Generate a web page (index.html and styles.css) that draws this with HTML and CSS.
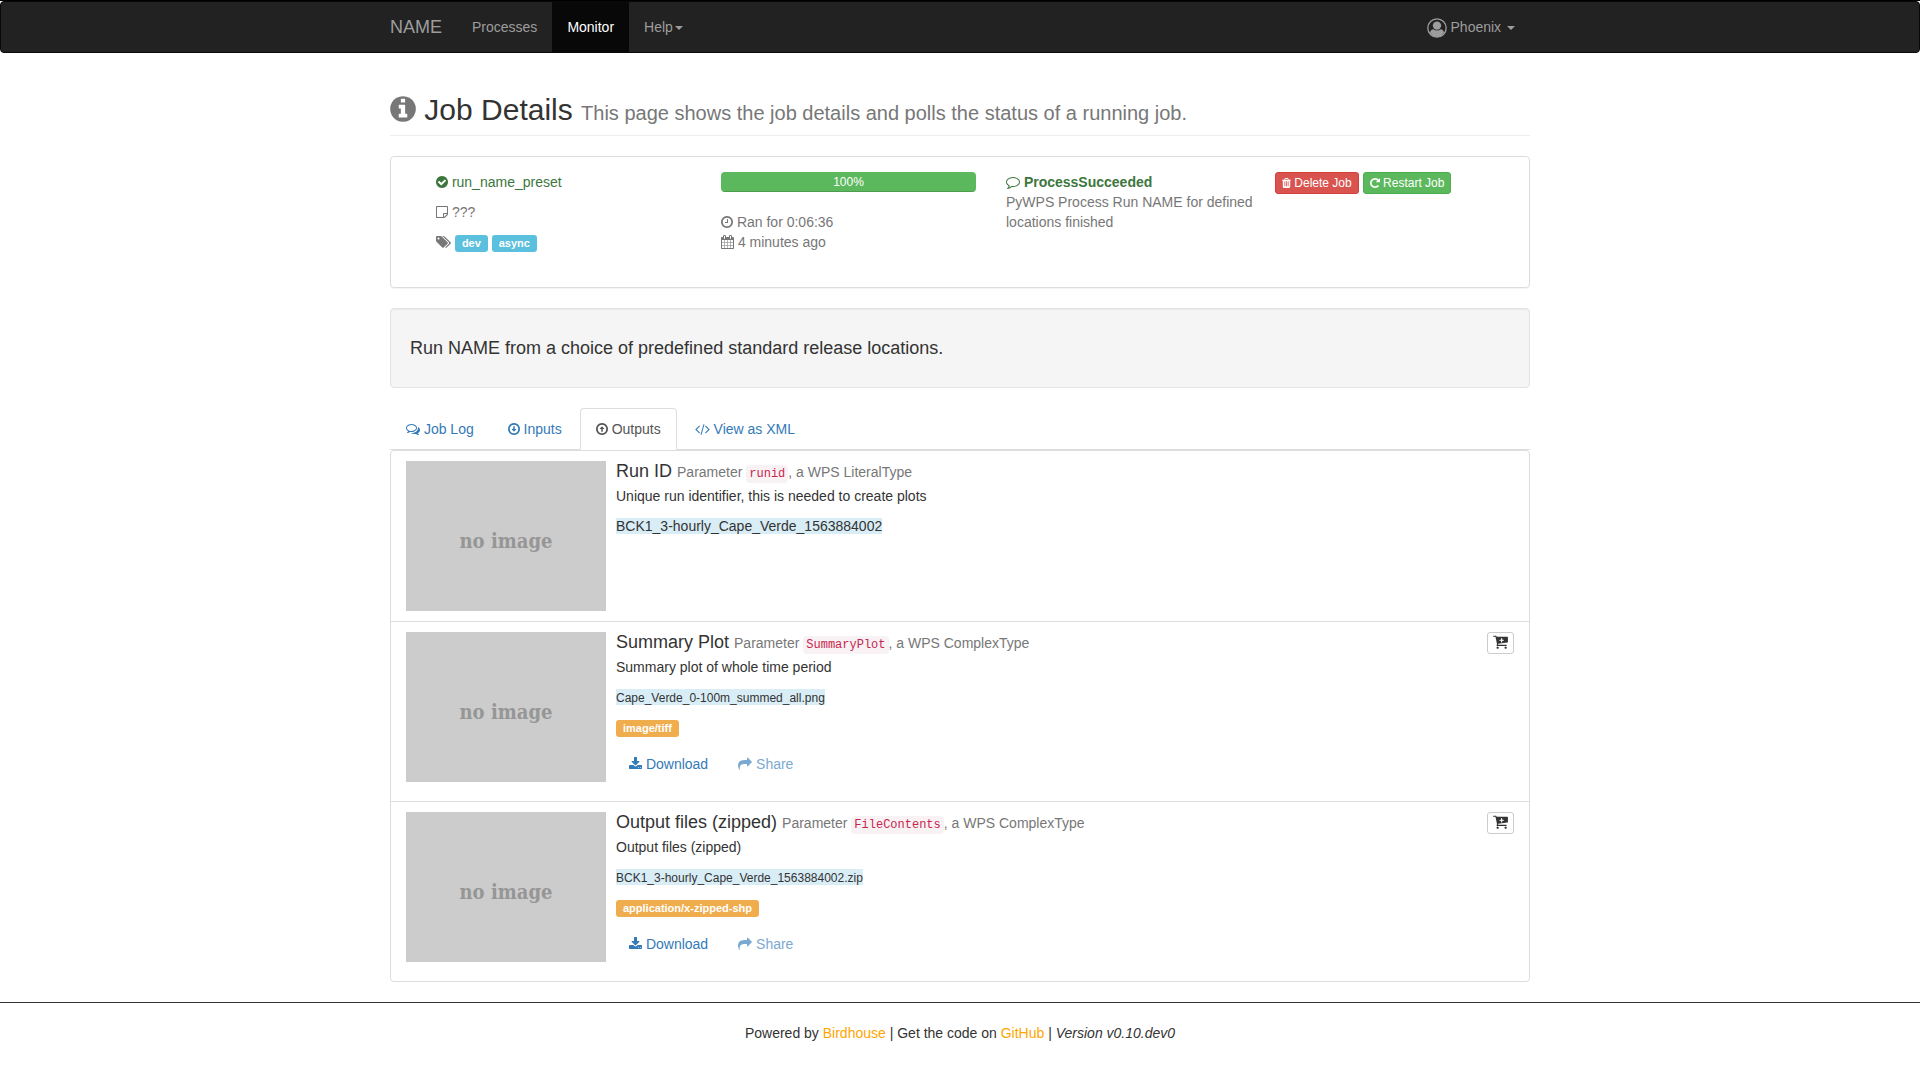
FILE: index.html
```html
<!DOCTYPE html>
<html lang="en">
<head>
<meta charset="utf-8">
<meta name="viewport" content="width=device-width, initial-scale=1">
<title>Job Details</title>
<link rel="stylesheet" href="styles.css">
</head>
<body>
<svg class="sprite" aria-hidden="true">
  <symbol id="info-circle" viewBox="128 0 1536 1792"><path d="M1152 1376v-160q0-14-9-23t-23-9h-96v-512q0-14-9-23t-23-9h-320q-14 0-23 9t-9 23v160q0 14 9 23t23 9h96v320h-96q-14 0-23 9t-9 23v160q0 14 9 23t23 9h448q14 0 23-9t9-23zm-128-896v-160q0-14-9-23t-23-9h-192q-14 0-23 9t-9 23v160q0 14 9 23t23 9h192q14 0 23-9t9-23zm640 416q0 209-103 385.5t-279.5 279.5-385.5 103-385.5-103-279.5-279.5-103-385.5 103-385.5 279.5-279.5 385.5-103 385.5 103 279.5 279.5 103 385.5z"/></symbol>
  <symbol id="check-circle" viewBox="128 0 1536 1792"><path d="M1412 734q0-28-18-46l-91-90q-19-19-45-19t-45 19l-408 407-226-226q-19-19-45-19t-45 19l-91 90q-18 18-18 46 0 27 18 45l362 362q19 19 45 19 27 0 46-19l543-543q18-18 18-45zm252 162q0 209-103 385.5t-279.5 279.5-385.5 103-385.5-103-279.5-279.5-103-385.5 103-385.5 279.5-279.5 385.5-103 385.5 103 279.5 279.5 103 385.5z"/></symbol>
  <symbol id="note" viewBox="128 0 1536 1792"><path fill-rule="evenodd" d="M224 128h1344q40 0 68 28t28 68v928q0 88-68 156l-288 288q-68 68-156 68h-928q-40 0-68-28t-28-68v-1344q0-40 28-68t68-28zM256 256v1280h768v-416q0-40 28-68t68-28h416v-768zM1152 1528q30-10 44-24l308-308q14-14 24-44h-376z"/></symbol>
  <symbol id="tags" viewBox="0 0 1920 1792"><path d="M448 448q0-53-37.500-90.500t-90.500-37.500-90.500 37.500-37.500 90.500 37.500 90.500 90.500 37.500 90.500-37.500 37.500-90.500zm1067 576q0 53-37 90l-491 492q-39 37-91 37-53 0-90-37l-715-716q-38-37-64.500-101t-26.500-117v-416q0-52 38-90t90-38h416q53 0 117 26.500t102 64.500l715 714q37 39 37 91zm384 0q0 53-37 90l-491 492q-39 37-91 37-36 0-59-14t-53-45l470-470q37-37 37-90 0-52-37-91l-715-714q-38-38-102-64.500t-117-26.500h224q53 0 117 26.500t102 64.500l715 714q37 39 37 91z"/></symbol>
  <symbol id="clock" viewBox="128 0 1536 1792"><path d="M1024 544v448q0 14-9 23t-23 9h-320q-14 0-23-9t-9-23v-64q0-14 9-23t23-9h224v-352q0-14 9-23t23-9h64q14 0 23 9t9 23zm416 352q0-148-73-273t-198-198-273-73-273 73-198 198-73 273 73 273 198 198 273 73 273-73 198-198 73-273zm224 0q0 209-103 385.500t-279.500 279.500-385.500 103-385.500-103-279.500-279.500-103-385.500 103-385.500 279.500-279.500 385.500-103 385.500 103 279.500 279.500 103 385.500z"/></symbol>
  <symbol id="calendar" viewBox="64 0 1664 1792"><path d="M192 1664h288v-288h-288v288zm352 0h320v-288h-320v288zm-352-352h288v-320h-288v320zm352 0h320v-320h-320v320zm-352-384h288v-288h-288v288zm736 736h320v-288h-320v288zm-384-736h320v-288h-320v288zm768 736h288v-288h-288v288zm-384-352h320v-320h-320v320zm-352-864v-288q0-13-9.500-22.500t-22.500-9.500h-64q-13 0-22.500 9.500t-9.500 22.500v288q0 13 9.500 22.500t22.500 9.500h64q13 0 22.500-9.500t9.500-22.500zm736 864h288v-320h-288v320zm-384-384h320v-288h-320v288zm384 0h288v-288h-288v288zm32-480v-288q0-13-9.500-22.500t-22.500-9.500h-64q-13 0-22.500 9.500t-9.500 22.500v288q0 13 9.500 22.500t22.500 9.500h64q13 0 22.500-9.500t9.500-22.500zm384-64v1280q0 52-38 90t-90 38h-1408q-52 0-90-38t-38-90v-1280q0-52 38-90t90-38h128v-96q0-66 47-113t113-47h64q66 0 113 47t47 113v96h384v-96q0-66 47-113t113-47h64q66 0 113 47t47 113v96h128q52 0 90 38t38 90z"/></symbol>
  <symbol id="comment" viewBox="0 0 1792 1792"><path d="M896 384q-204 0-381.500 69.500t-282 187.500-104.500 255q0 112 71.500 213.500t201.500 175.500l87 50-27 96q-24 91-70 172 152-63 275-171l43-38 57 6q69 8 130 8 204 0 381.500-69.500t282-187.500 104.500-255-104.500-255-282-187.500-381.500-69.500zm896 512q0 174-120 321.500t-326 233-450 85.500q-70 0-145-8-198 175-460 242-49 14-114 22h-5q-15 0-27-10.500t-16-27.500v-1q-3-4-.5-12t2-10 4.500-9.500l6-9 7-8.500 8-9q7-8 31-34.500t34.500-38 31-39.500 32.500-51 27-59 26-76q-157-89-247.500-220t-90.500-281q0-174 120-321.500t326-233 450-85.500 450 85.500 326 233 120 321.500z"/></symbol>
  <symbol id="comments" viewBox="0 0 1792 1792"><path d="M704 384q-153 0-286 52t-211.500 141-78.500 191q0 82 53 158t149 132l97 56-35 84q34-20 62-39l44-31 53 10q78 14 153 14 153 0 286-52t211.500-141 78.500-191-78.500-191-211.500-141-286-52zm0-128q191 0 353.500 68.500t256.500 186.500 94 257-94 257-256.500 186.500-353.500 68.500q-86 0-176-16-124 88-278 128-36 9-86 16h-3q-11 0-20.500-8t-11.500-21q-1-3-1-6.500t.5-6.500 2-6l2.500-5 3.500-5.500 4-5 4.500-5 4-4.500q5-6 23-25t26-29.500 22.500-29 25-38.500 20.500-44q-124-72-195-177t-71-224q0-139 94-257t256.500-186.500 353.500-68.500zm822 1169q10 24 20.500 44t25 38.500 22.500 29 26 29.500 23 25q1 1 4 4.500t4.500 5 4 5 3.500 5.500l2.500 5 2 6 .5 6.500-1 6.500q-3 14-13 22t-22 7q-50-7-86-16-154-40-278-128-90 16-176 16-271 0-472-132 58 4 88 4 161 0 309-45t264-129q125-92 192-212t67-254q0-77-23-152 129 71 204 178t75 230q0 120-71 224.500t-195 176.500z"/></symbol>
  <symbol id="circle-down" viewBox="128 0 1536 1792"><path d="M992 576v320h160q21 0 29 20 8 19-7 35l-255 255q-10 10-23 10t-23-10l-255-255q-15-16-7-35 8-20 29-20h160v-320q0-14 9-23t23-9h128q14 0 23 9t9 23zm448 320q0-148-73-273t-198-198-273-73-273 73-198 198-73 273 73 273 198 198 273 73 273-73 198-198 73-273zm224 0q0 209-103 385.500t-279.500 279.500-385.500 103-385.500-103-279.500-279.500-103-385.500 103-385.500 279.500-279.500 385.500-103 385.500 103 279.500 279.500 103 385.500z"/></symbol>
  <symbol id="circle-up" viewBox="128 0 1536 1792"><path transform="rotate(180 896 896)" d="M992 576v320h160q21 0 29 20 8 19-7 35l-255 255q-10 10-23 10t-23-10l-255-255q-15-16-7-35 8-20 29-20h160v-320q0-14 9-23t23-9h128q14 0 23 9t9 23zm448 320q0-148-73-273t-198-198-273-73-273 73-198 198-73 273 73 273 198 198 273 73 273-73 198-198 73-273zm224 0q0 209-103 385.500t-279.500 279.500-385.500 103-385.500-103-279.500-279.500-103-385.500 103-385.500 279.500-279.500 385.500-103 385.500 103 279.500 279.500 103 385.500z"/></symbol>
  <symbol id="code" viewBox="0 0 1920 1792"><path d="M617 1399l-50 50q-10 10-23 10t-23-10l-466-466q-10-10-10-23t10-23l466-466q10-10 23-10t23 10l50 50q10 10 10 23t-10 23l-393 393 393 393q10 10 10 23t-10 23zm591-1067l-373 1291q-4 13-15.500 19.500t-23.500 2.500l-62-17q-13-4-19.500-15.500t-2.500-24.500l373-1291q4-13 15.500-19.500t23.500-2.500l62 17q13 4 19.500 15.500t2.500 24.500zm657 651l-466 466q-10 10-23 10t-23-10l-50-50q-10-10-10-23t10-23l393-393-393-393q-10-10-10-23t10-23l50-50q10-10 23-10t23 10l466 466q10 10 10 23t-10 23z"/></symbol>
  <symbol id="download" viewBox="64 0 1664 1792"><path d="M1344 1344q0-26-19-45t-45-19-45 19-19 45 19 45 45 19 45-19 19-45zm256 0q0-26-19-45t-45-19-45 19-19 45 19 45 45 19 45-19 19-45zm128-224v320q0 40-28 68t-68 28h-1472q-40 0-68-28t-28-68v-320q0-40 28-68t68-28h465l135 136q58 56 136 56t136-56l136-136h464q40 0 68 28t28 68zm-325-569q17 41-14 70l-448 448q-18 19-45 19t-45-19l-448-448q-31-29-14-70 17-39 59-39h256v-448q0-26 19-45t45-19h256q26 0 45 19t19 45v448h256q42 0 59 39z"/></symbol>
  <symbol id="share" viewBox="0 0 1792 1792"><path d="M1792 640q0 26-19 45l-512 512q-19 19-45 19t-45-19-19-45v-256h-224q-98 0-175.500 6t-154 21.500-133 42.500-105.500 69.500-80 101-48.500 138.500-17.500 181q0 55 5 123 0 6 2.500 23.500t2.500 26.500q0 15-8.500 25t-23.500 10q-16 0-28-17-7-9-13-22t-13.500-30-10.500-24q-127-285-127-451 0-199 53-333 162-403 875-403h224v-256q0-26 19-45t45-19 45 19l512 512q19 19 19 45z"/></symbol>
  <symbol id="trash" viewBox="192 0 1408 1792"><path d="M704 1376v-704q0-14-9-23t-23-9h-64q-14 0-23 9t-9 23v704q0 14 9 23t23 9h64q14 0 23-9t9-23zm256 0v-704q0-14-9-23t-23-9h-64q-14 0-23 9t-9 23v704q0 14 9 23t23 9h64q14 0 23-9t9-23zm256 0v-704q0-14-9-23t-23-9h-64q-14 0-23 9t-9 23v704q0 14 9 23t23 9h64q14 0 23-9t9-23zm-544-992h448l-48-117q-7-9-17-11h-317q-10 2-17 11zm928 32v64q0 14-9 23t-23 9h-96v948q0 83-47 143.500t-113 60.500h-832q-66 0-113-58.500t-47-141.500v-952h-96q-14 0-23-9t-9-23v-64q0-14 9-23t23-9h309l70-167q15-37 54-63t79-26h320q40 0 79 26t54 63l70 167h309q14 0 23 9t9 23z"/></symbol>
  <symbol id="repeat" viewBox="128 0 1536 1792"><path d="M1664 256v448q0 26-19 45t-45 19h-448q-42 0-59-40-17-39 14-69l138-138q-148-137-349-137-104 0-198.500 40.500t-163.500 109.500-109.500 163.500-40.500 198.500 40.500 198.500 109.500 163.500 163.500 109.500 198.500 40.500q119 0 225-52t179-147q7-10 23-12 15 0 25 9l137 138q9 8 9.500 20.500t-7.500 22.500q-109 132-264 204.500t-327 72.500q-156 0-298-61t-245-164-164-245-61-298 61-298 164-245 245-164 298-61q147 0 284.500 55.500t244.500 156.500l130-129q29-31 70-14 39 17 39 59z"/></symbol>
  <symbol id="cart-plus" viewBox="64 0 1664 1792"><path fill-rule="evenodd" d="M1280 704q0-26-19-45t-45-19h-128v-128q0-26-19-45t-45-19-45 19-19 45v128h-128q-26 0-45 19t-19 45 19 45 45 19h128v128q0 26 19 45t45 19 45-19 19-45v-128h128q26 0 45-19t19-45zM704 1536q0 52-38 90t-90 38-90-38-38-90 38-90 90-38 90 38 38 90zm896 0q0 52-38 90t-90 38-90-38-38-90 38-90 90-38 90 38 38 90zm128-1152v512q0 24-16.500 42.500t-40.500 21.500l-1044 122q13 60 13 70 0 16-24 64h920q26 0 45 19t19 45-19 45-45 19h-1024q-26 0-45-19t-19-45q0-11 8-31.500t16-36 21.500-40 15.500-29.500l-177-823h-204q-26 0-45-19t-19-45 19-45 45-19h256q16 0 28.500 6.500t19.500 15.500 13 24.500 8 26 5.500 29.500 4.500 26h1201q26 0 45 19t19 45z"/></symbol>
  <symbol id="user" viewBox="0 0 20 20"><circle cx="10" cy="10" r="9.200" fill="none" stroke="currentColor" stroke-width="1.300"/><circle cx="10" cy="7.600" r="4.200"/><path d="M3 14.800q.6-3.200 3.400-3.500 1.500 1.200 3.600 1.200t3.600-1.200q2.800.3 3.400 3.500-2.600 4.200-7 4.200t-7-4.200z"/></symbol>
</svg>

<nav class="navbar">
  <div class="container navbar-row">
    <a class="brand" href="#">NAME</a>
    <ul class="menu">
      <li><a href="#">Processes</a></li>
      <li><a class="active" href="#">Monitor</a></li>
      <li><a href="#">Help<span class="caret"></span></a></li>
    </ul>
    <ul class="menu menu-right">
      <li><a href="#"><svg class="icon icon-user"><use href="#user"/></svg> Phoenix <span class="caret"></span></a></li>
    </ul>
  </div>
</nav>

<main class="container">
  <header class="page-header">
    <h1><svg class="icon icon-title"><use href="#info-circle"/></svg> Job Details <small>This page shows the job details and polls the status of a running job.</small></h1>
  </header>

  <section class="panel">
    <div class="col muted">
      <p class="success"><svg class="icon w12"><use href="#check-circle"/></svg> run_name_preset</p>
      <p><svg class="icon w12"><use href="#note"/></svg> ???</p>
      <p><svg class="icon w15"><use href="#tags"/></svg> <span class="label info">dev</span> <span class="label info">async</span></p>
    </div>
    <div class="col muted">
      <div class="progress"><div class="progress-bar" style="width: 100%">100%</div></div>
      <div><svg class="icon w12"><use href="#clock"/></svg> Ran for 0:06:36</div>
      <div><svg class="icon w13"><use href="#calendar"/></svg> 4 minutes ago</div>
    </div>
    <div class="col muted">
      <div class="success"><svg class="icon w14"><use href="#comment"/></svg> <strong>ProcessSucceeded</strong></div>
      <div>PyWPS Process Run NAME for defined locations finished</div>
    </div>
    <div class="actions">
      <button type="button" class="btn-xs danger"><svg class="icon w9"><use href="#trash"/></svg> Delete Job</button>
      <button type="button" class="btn-xs ok"><svg class="icon w10"><use href="#repeat"/></svg> Restart Job</button>
    </div>
  </section>

  <section class="well">Run NAME from a choice of predefined standard release locations.</section>

  <ul class="tabs">
    <li><a href="#"><svg class="icon w14"><use href="#comments"/></svg> Job Log</a></li>
    <li><a href="#"><svg class="icon w12"><use href="#circle-down"/></svg> Inputs</a></li>
    <li><a class="active" href="#"><svg class="icon w12"><use href="#circle-up"/></svg> Outputs</a></li>
    <li><a href="#"><svg class="icon w15"><use href="#code"/></svg> View as XML</a></li>
  </ul>

  <ul class="list">
    <li class="item">
      <div class="thumb">no image</div>
      <div class="item-body">
        <h4>Run ID <small>Parameter <code>runid</code>, a WPS LiteralType</small></h4>
        <p>Unique run identifier, this is needed to create plots</p>
        <p><span class="value">BCK1_3-hourly_Cape_Verde_1563884002</span></p>
      </div>
    </li>
    <li class="item">
      <div class="thumb">no image</div>
      <div class="item-body">
        <h4>Summary Plot <small>Parameter <code>SummaryPlot</code>, a WPS ComplexType</small></h4>
        <p>Summary plot of whole time period</p>
        <p><span class="value"><span class="file">Cape_Verde_0-100m_summed_all.png</span></span></p>
        <p><span class="label warning">image/tiff</span></p>
        <div class="links">
          <a href="#"><svg class="icon w13"><use href="#download"/></svg> Download</a>
          <a class="disabled" href="#"><svg class="icon w14"><use href="#share"/></svg> Share</a>
        </div>
      </div>
      <button type="button" class="btn-xs plain" aria-label="Add to cart"><svg class="icon icon-cart"><use href="#cart-plus"/></svg></button>
    </li>
    <li class="item">
      <div class="thumb">no image</div>
      <div class="item-body">
        <h4>Output files (zipped) <small>Parameter <code>FileContents</code>, a WPS ComplexType</small></h4>
        <p>Output files (zipped)</p>
        <p><span class="value"><span class="file">BCK1_3-hourly_Cape_Verde_1563884002.zip</span></span></p>
        <p><span class="label warning">application/x-zipped-shp</span></p>
        <div class="links">
          <a href="#"><svg class="icon w13"><use href="#download"/></svg> Download</a>
          <a class="disabled" href="#"><svg class="icon w14"><use href="#share"/></svg> Share</a>
        </div>
      </div>
      <button type="button" class="btn-xs plain" aria-label="Add to cart"><svg class="icon icon-cart"><use href="#cart-plus"/></svg></button>
    </li>
  </ul>
</main>

<footer class="footer">Powered by <a href="#">Birdhouse</a> | Get the code on <a href="#">GitHub</a> | <em>Version v0.10.dev0</em></footer>
</body>
</html>
```
FILE: styles.css
```css
* { box-sizing: border-box; }

body {
  margin: 0;
  border-top: 1px solid #000;
  background: #fff;
  color: #333;
  font: 14px/20px "Liberation Sans", Arial, sans-serif;
}

ul { margin: 0; padding: 0; list-style: none; }
p { margin: 0 0 10px; }
a { color: #337ab7; text-decoration: none; }
.sprite { display: none; }

.container {
  max-width: 1170px;
  margin: 0 auto;
  padding: 0 15px;
}

/* Icons */
.icon {
  display: inline-block;
  width: 14px;
  height: 14px;
  vertical-align: -2px;
  fill: currentColor;
}
.w9 { width: 9px; height: 12px; }
.w10 { width: 10px; height: 12px; }
.w12 { width: 12px; }
.w13 { width: 13px; }
.w15 { width: 15px; }
.icon-title { width: 26px; height: 30px; vertical-align: -4px; color: #777; }
.icon-user { width: 20px; height: 20px; margin: -5px 0; vertical-align: middle; }
.icon-cart { width: 15px; height: 16px; vertical-align: -3px; }

/* Navigation bar */
.navbar {
  border: 1px solid #080808;
  border-radius: 4px;
  background: #222;
}
.navbar-row { display: flex; }
.navbar a { display: block; color: #9d9d9d; padding: 15px; }
.navbar .brand { padding-left: 0; font-size: 18px; }
.menu { display: flex; }
.menu-right { margin-left: auto; }
.navbar .active { background: #080808; color: #fff; }
.caret {
  display: inline-block;
  margin-left: 2px;
  vertical-align: middle;
  border-top: 4px solid;
  border-left: 4px solid transparent;
  border-right: 4px solid transparent;
}

/* Page title */
.page-header {
  margin: 40px 0 20px;
  padding-bottom: 9px;
  border-bottom: 1px solid #eee;
}
h1 { margin: 0; font-size: 30px; line-height: 33px; font-weight: 500; }
h1 small { font-size: 20px; line-height: 20px; font-weight: 400; color: #777; }

/* Job summary */
.panel {
  display: grid;
  grid-template-columns: repeat(3, minmax(0, 285px)) 1fr;
  margin-bottom: 20px;
  padding: 15px 0 25px 30px;
  border: 1px solid #ddd;
  border-radius: 4px;
  box-shadow: 0 1px 1px rgba(0, 0, 0, .05);
}
.col { padding: 0 15px; }
.muted { color: #777; }
.success { color: #3c763d; }
.actions { display: flex; align-items: flex-start; gap: 4px; margin-left: -1px; }

.progress {
  height: 20px;
  margin-bottom: 20px;
  overflow: hidden;
  border-radius: 4px;
  background: #f5f5f5;
}
.progress-bar {
  background: #5cb85c;
  box-shadow: inset 0 -1px 0 rgba(0, 0, 0, .15);
  color: #fff;
  font-size: 12px;
  text-align: center;
}

.label {
  padding: 2px 7px 3px;
  border-radius: 3px;
  color: #fff;
  font-size: 11px;
  font-weight: 700;
  line-height: 11px;
}
.info { background: #5bc0de; }
.warning { background: #f0ad4e; }

.btn-xs {
  padding: 1px 6px;
  border: 1px solid;
  border-radius: 3px;
  font: 12px/18px "Liberation Sans", Arial, sans-serif;
  white-space: nowrap;
}
.danger { background: #d9534f; border-color: #d43f3a; color: #fff; }
.ok { background: #5cb85c; border-color: #4cae4c; color: #fff; }
.plain { height: 22px; padding: 1px 5px; background: #fff; border-color: #ccc; color: #333; }

.well {
  margin-bottom: 20px;
  padding: 29px 19px;
  border: 1px solid #e3e3e3;
  border-radius: 4px;
  background: #f5f5f5;
  box-shadow: inset 0 1px 1px rgba(0, 0, 0, .05);
  font-size: 18px;
}

/* Tabs */
.tabs { display: flex; gap: 2px; border-bottom: 1px solid #ddd; }
.tabs li { margin-bottom: -1px; }
.tabs a {
  display: block;
  padding: 10px 15px;
  border: 1px solid transparent;
  border-radius: 4px 4px 0 0;
}
.tabs .active { background: #fff; border-color: #ddd #ddd #fff; color: #555; }

/* Outputs */
.list { border: 1px solid #ddd; border-radius: 4px; margin-bottom: 20px; }
.item { display: flex; align-items: flex-start; gap: 10px; padding: 10px 15px; }
.item + .item { border-top: 1px solid #ddd; }
.thumb {
  flex: none;
  width: 200px;
  height: 150px;
  background: #ccc;
  color: #969696;
  font: bold 20px/160px "DejaVu Serif Condensed", "DejaVu Serif", serif;
  text-align: center;
}
.item-body { flex: 1; }
h4 { margin: 0 0 5px; font-size: 18px; line-height: 20px; font-weight: 500; }
h4 small { font-size: 14px; line-height: 14px; font-weight: 400; color: #777; }
code {
  padding: 2px 3px;
  border-radius: 4px;
  background: #f9f2f4;
  color: #c7254e;
  font: 12px/14px "Liberation Mono", monospace;
}
.value { background: #d9edf7; }
.file { font-size: 12px; line-height: 14px; }
.links { display: flex; gap: 4px; margin-bottom: 10px; }
.links a { padding: 7px 13px; }
.disabled { opacity: .65; }

.footer {
  padding: 20px 15px;
  border-top: 1px solid #333;
  text-align: center;
}
.footer a { color: #ffa500; }
```
